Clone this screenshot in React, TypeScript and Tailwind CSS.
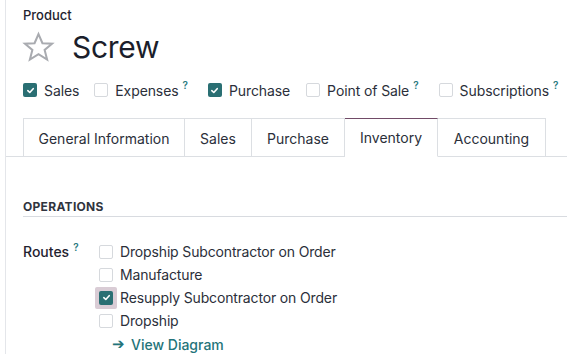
import React from "react";

const Check = ({ on }: { on?: boolean }) => (
  <span
    className={
      on
        ? "flex h-[14px] w-[14px] shrink-0 items-center justify-center rounded-[2px] bg-[#2a6f73]"
        : "block h-[14px] w-[14px] shrink-0 rounded-[2px] border border-[#d6d9dd] bg-white"
    }
  >
    {on && (
      <svg viewBox="0 0 10 10" className="h-[9px] w-[9px]">
        <path d="M2 5.2 L4.2 7.2 L8 3" fill="none" stroke="white" strokeWidth="1.8" strokeLinecap="round" strokeLinejoin="round" />
      </svg>
    )}
  </span>
);

const Help = () => (
  <sup className="ml-[4px] text-[10px] font-semibold text-[#2a7a80]">?</sup>
);

const TopOption = ({ label, on, help, className }: { label: string; on?: boolean; help?: boolean; className?: string }) => (
  <div className={"flex items-center " + (className ?? "")}>
    <Check on={on} />
    <span className="ml-[7px] text-[14px] tracking-[-0.1px] text-[#2b2f3a]">{label}</span>
    {help && <Help />}
  </div>
);

const tabs = [
  { name: "General Information", w: "w-[162px]" },
  { name: "Sales", w: "w-[67px]" },
  { name: "Purchase", w: "w-[93px]" },
  { name: "Inventory", w: "w-[93px]" },
  { name: "Accounting", w: "w-[108px]" },
];

const RouteRow = ({ label, on, focus }: { label: string; on?: boolean; focus?: boolean }) => (
  <div className="flex h-[23px] items-center">
    <span className={"flex " + (focus ? "-ml-[4px] rounded-[2px] bg-[#d9ccd5] p-[4px]" : "")}>
      <Check on={on} />
    </span>
    <span className={"text-[14px] tracking-[-0.15px] text-[#2b2f3a] " + (focus ? "ml-[3px]" : "ml-[7px]")}>{label}</span>
  </div>
);

export default function App() {
  return (
    <div className="h-[354px] w-[567px] overflow-hidden bg-white font-['Inter',sans-serif]">
      <div className="ml-[5px] h-full border-l border-[#e4e6ea]">
        <div className="pl-[17px] pt-[6px]">
          <div className="text-[13px] font-medium leading-[18px] text-[#1f2330]">Product</div>
          <div className="flex h-[46px] items-center">
            <svg viewBox="0 0 24 24" className="ml-[-2px] h-[35px] w-[35px]">
              <path
                d="M12 2.8 L14.7 9.1 L21.3 9.4 L16.2 13.7 L17.9 20.3 L12 16.6 L6.1 20.3 L7.8 13.7 L2.7 9.4 L9.3 9.1 Z"
                fill="none"
                stroke="#a9abb0"
                strokeWidth="1.4"
                strokeLinejoin="miter"
              />
            </svg>
            <span className="ml-[16px] text-[30px] font-normal tracking-[-0.3px] text-[#1b1e2b]">Screw</span>
          </div>
          <div className="mt-[10px] flex h-[20px] items-center">
            <TopOption label="Sales" on />
            <TopOption label="Expenses" help className="ml-[15px]" />
            <TopOption label="Purchase" on className="ml-[20px]" />
            <TopOption label="Point of Sale" help className="ml-[16px]" />
            <TopOption label="Subscriptions" help className="ml-[20px]" />
          </div>
        </div>

        <div className="mt-[18px] flex border-b border-[#dcdfe3] pl-[17px]">
          {tabs.map((t, i) => {
            const active = t.name === "Inventory";
            return (
              <div
                key={t.name}
                className={
                  "-mb-px flex h-[39px] items-center justify-center border-r border-t text-[14px] text-[#2b2f3a] " +
                  t.w +
                  (i === 0 ? " border-l" : "") +
                  (active
                    ? " border-b border-b-white border-t-[#714b67] border-r-[#dcdfe3] bg-white"
                    : " border-[#dcdfe3]")
                }
              >
                {t.name}
              </div>
            );
          })}
        </div>

        <div className="pl-[17px] pt-[42px]">
          <div className="border-b border-[#d8dbe0] pb-[1px] text-[12px] font-bold leading-[16px] tracking-[0.3px] text-[#30343e]">
            OPERATIONS
          </div>
          <div className="mt-[23px] flex">
            <div className="flex h-[23px] w-[76px] items-center">
              <span className="text-[14px] font-medium text-[#1f2330]">Routes</span>
              <Help />
            </div>
            <div className="flex flex-col">
              <RouteRow label="Dropship Subcontractor on Order" />
              <RouteRow label="Manufacture" />
              <RouteRow label="Resupply Subcontractor on Order" on focus />
              <RouteRow label="Dropship" />
              <div className="ml-[13px] flex h-[24px] items-center text-[14px] font-medium text-[#24747a]">
                <span className="text-[15px]">➔</span>
                <span className="ml-[6px]">View Diagram</span>
              </div>
            </div>
          </div>
        </div>
      </div>
    </div>
  );
}
